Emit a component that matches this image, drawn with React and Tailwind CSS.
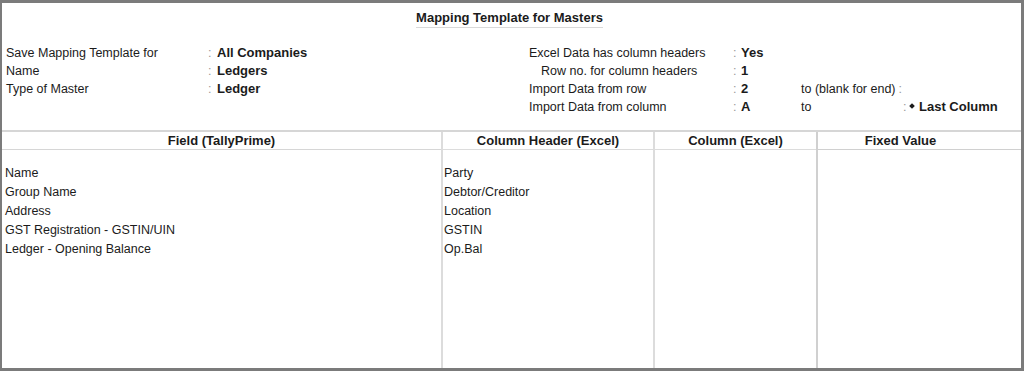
const leftInfo = [
  { label: 'Save Mapping Template for', value: 'All Companies' },
  { label: 'Name', value: 'Ledgers' },
  { label: 'Type of Master', value: 'Ledger' },
];

const fields = [
  ['Name', 'Party'],
  ['Group Name', 'Debtor/Creditor'],
  ['Address', 'Location'],
  ['GST Registration - GSTIN/UIN', 'GSTIN'],
  ['Ledger - Opening Balance', 'Op.Bal'],
];

export default function App() {
  return (
    <div
      className="w-[1024px] h-[371px] bg-white text-[12.5px] text-[#1b1b1b] border-t-[3px] border-l-2 border-r-[3px] border-b-[3px] border-[#7b7b7b] flex flex-col overflow-hidden"
      style={{ fontFamily: '"Liberation Sans", Arial, sans-serif' }}
    >
      <div className="h-[127px] flex flex-col">
        <div className="flex justify-center pt-[7px] pr-[4px]">
          <span className="font-bold text-[13px] leading-[16px] border-b border-[#d9d9d9] pb-[1px]">
            Mapping Template for Masters
          </span>
        </div>

        <div className="flex mt-[16px]">
          <div className="w-[527px] pl-[4px]">
            {leftInfo.map((r) => (
              <div key={r.label} className="flex h-[18px] items-center">
                <span className="w-[202px]">{r.label}</span>
                <span className="text-[#9a9a9a] w-[9px]">:</span>
                <span className="font-bold text-[13px]">{r.value}</span>
              </div>
            ))}
          </div>

          <div className="flex-1">
            <div className="flex h-[18px] items-center">
              <span className="w-[204px]">Excel Data has column headers</span>
              <span className="text-[#9a9a9a] w-[8px]">:</span>
              <span className="font-bold text-[13px]">Yes</span>
            </div>
            <div className="flex h-[18px] items-center">
              <span className="w-[204px] pl-[12px]">Row no. for column headers</span>
              <span className="text-[#9a9a9a] w-[8px]">:</span>
              <span className="font-bold text-[13px]">1</span>
            </div>
            <div className="flex h-[18px] items-center">
              <span className="w-[204px]">Import Data from row</span>
              <span className="text-[#9a9a9a] w-[8px]">:</span>
              <span className="font-bold text-[13px] w-[60px]">2</span>
              <span>to (blank for end)</span>
              <span className="text-[#9a9a9a] ml-[3px]">:</span>
            </div>
            <div className="flex h-[18px] items-center">
              <span className="w-[204px]">Import Data from column</span>
              <span className="text-[#9a9a9a] w-[8px]">:</span>
              <span className="font-bold text-[13px] w-[60px]">A</span>
              <span className="w-[102px]">to</span>
              <span className="text-[#9a9a9a] w-[7px]">:</span>
              <span className="w-[4px] h-[4px] rotate-45 bg-[#1b1b1b] mr-[5px] mb-[3px]" />
              <span className="font-bold text-[13px]">Last Column</span>
            </div>
          </div>
        </div>
      </div>

      <div className="flex-1 grid grid-cols-[439px_212px_163px_1fr] grid-rows-[18px_1fr] border-t-2 border-[#d6d6d6] text-[12.5px]">
        <div className="font-bold text-[13px] text-center leading-[17px] border-b border-[#d6d6d6]">Field (TallyPrime)</div>
        <div className="font-bold text-[13px] text-center leading-[17px] border-b border-l-2 border-[#dcdcdc]">Column Header (Excel)</div>
        <div className="font-bold text-[13px] text-center leading-[17px] border-b border-l-2 border-[#dcdcdc]">Column (Excel)</div>
        <div className="font-bold text-[13px] text-center leading-[17px] border-b border-l-2 border-[#d0d0d0] pr-[38px]">Fixed Value</div>

        <div className="pt-[14px] pl-[3px]">
          {fields.map(([f]) => (
            <div key={f} className="h-[19px] leading-[19px]">{f}</div>
          ))}
        </div>
        <div className="pt-[14px] pl-[1px] border-l-2 border-[#dcdcdc]">
          {fields.map(([f, c]) => (
            <div key={f} className="h-[19px] leading-[19px]">{c}</div>
          ))}
        </div>
        <div className="border-l-2 border-[#dcdcdc]" />
        <div className="border-l-2 border-[#d0d0d0]" />
      </div>
    </div>
  );
}
